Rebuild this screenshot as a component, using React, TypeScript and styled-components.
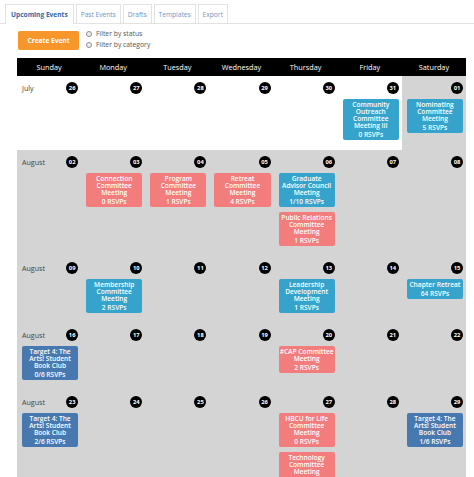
import { Fragment } from 'react';
import styled, { createGlobalStyle } from 'styled-components';

type EventKind = 'blue' | 'pink' | 'navy';

interface CalEvent {
  lines: string[];
  rsvp: string;
  kind: EventKind;
}

interface Day {
  n: string;
  inMonth: boolean;
  events?: CalEvent[];
}

interface Week {
  month: string;
  days: Day[];
}

const eventColors: Record<EventKind, string> = {
  blue: '#35a3cb',
  pink: '#f37c7c',
  navy: '#4779b0',
};

const tabs = ['Upcoming Events', 'Past Events', 'Drafts', 'Templates', 'Export'];
const dayNames = ['Sunday', 'Monday', 'Tuesday', 'Wednesday', 'Thursday', 'Friday', 'Saturday'];

const committee = (first: string, rsvp: string, kind: EventKind): CalEvent => ({
  lines: [first, 'Committee', 'Meeting'],
  rsvp,
  kind,
});

const target = (rsvp: string): CalEvent => ({
  lines: ['Target 4: The', 'Arts! Student', 'Book Club'],
  rsvp,
  kind: 'navy',
});

const weeks: Week[] = [
  {
    month: 'July',
    days: [
      { n: '26', inMonth: false },
      { n: '27', inMonth: false },
      { n: '28', inMonth: false },
      { n: '29', inMonth: false },
      { n: '30', inMonth: false },
      {
        n: '31',
        inMonth: false,
        events: [
          { lines: ['Community', 'Outreach', 'Committee', 'Meeting III'], rsvp: '0 RSVPs', kind: 'blue' },
        ],
      },
      { n: '01', inMonth: true, events: [committee('Nominating', '5 RSVPs', 'blue')] },
    ],
  },
  {
    month: 'August',
    days: [
      { n: '02', inMonth: true },
      { n: '03', inMonth: true, events: [committee('Connection', '0 RSVPs', 'pink')] },
      { n: '04', inMonth: true, events: [committee('Program', '1 RSVPs', 'pink')] },
      { n: '05', inMonth: true, events: [committee('Retreat', '4 RSVPs', 'pink')] },
      {
        n: '06',
        inMonth: true,
        events: [
          { lines: ['Graduate', 'Advisor Council', 'Meeting'], rsvp: '1/10 RSVPs', kind: 'blue' },
          { lines: ['Public Relations', 'Committee', 'Meeting'], rsvp: '1 RSVPs', kind: 'pink' },
        ],
      },
      { n: '07', inMonth: true },
      { n: '08', inMonth: true },
    ],
  },
  {
    month: 'August',
    days: [
      { n: '09', inMonth: true },
      { n: '10', inMonth: true, events: [committee('Membership', '2 RSVPs', 'blue')] },
      { n: '11', inMonth: true },
      { n: '12', inMonth: true },
      {
        n: '13',
        inMonth: true,
        events: [{ lines: ['Leadership', 'Development', 'Meeting'], rsvp: '1 RSVPs', kind: 'blue' }],
      },
      { n: '14', inMonth: true },
      { n: '15', inMonth: true, events: [{ lines: ['Chapter Retreat'], rsvp: '64 RSVPs', kind: 'blue' }] },
    ],
  },
  {
    month: 'August',
    days: [
      { n: '16', inMonth: true, events: [target('0/6 RSVPs')] },
      { n: '17', inMonth: true },
      { n: '18', inMonth: true },
      { n: '19', inMonth: true },
      {
        n: '20',
        inMonth: true,
        events: [{ lines: ['#CAP Committee', 'Meeting'], rsvp: '2 RSVPs', kind: 'pink' }],
      },
      { n: '21', inMonth: true },
      { n: '22', inMonth: true },
    ],
  },
  {
    month: 'August',
    days: [
      { n: '23', inMonth: true, events: [target('2/6 RSVPs')] },
      { n: '24', inMonth: true },
      { n: '25', inMonth: true },
      { n: '26', inMonth: true },
      {
        n: '27',
        inMonth: true,
        events: [
          { lines: ['HBCU for Life', 'Committee', 'Meeting'], rsvp: '0 RSVPs', kind: 'pink' },
          committee('Technology', '0 RSVPs', 'pink'),
        ],
      },
      { n: '28', inMonth: true },
      { n: '29', inMonth: true, events: [target('1/6 RSVPs')] },
    ],
  },
];

const App = () => {
  return (
    <>
      <GlobalStyle />
      <Page>
        <TabBar>
          {tabs.map((t, i) => (
            <Tab key={t} active={i === 0}>
              {t}
            </Tab>
          ))}
        </TabBar>
        <Toolbar>
          <CreateButton>Create Event</CreateButton>
          <Filters>
            <FilterItem>
              <Radio />
              Filter by status
            </FilterItem>
            <FilterItem>
              <Radio />
              Filter by category
            </FilterItem>
          </Filters>
        </Toolbar>
        <Calendar>
          <HeaderRow>
            {dayNames.map((d) => (
              <HeaderCell key={d}>{d}</HeaderCell>
            ))}
          </HeaderRow>
          {weeks.map((week, wi) => (
            <WeekRow key={wi}>
              {week.days.map((day, di) => (
                <Cell key={day.n + di} inMonth={day.inMonth}>
                  <CellHead>
                    <MonthLabel>{di === 0 ? week.month : ''}</MonthLabel>
                    <DayNumber>{day.n}</DayNumber>
                  </CellHead>
                  {day.events?.map((ev, ei) => (
                    <EventBox key={ei} kind={ev.kind}>
                      <EventTitle>
                        {ev.lines.map((l, li) => (
                          <Fragment key={l}>
                            {li > 0 && <br />}
                            {l}
                          </Fragment>
                        ))}
                      </EventTitle>
                      <Rsvp>{ev.rsvp}</Rsvp>
                    </EventBox>
                  ))}
                </Cell>
              ))}
            </WeekRow>
          ))}
        </Calendar>
      </Page>
    </>
  );
};

export default App;

const GlobalStyle = createGlobalStyle`
  body {
    margin: 0;
    background: #ffffff;
    font-family: "Open Sans", "DejaVu Sans", sans-serif;
  }
`;

const Page = styled.div`
  width: 474px;
`;

const TabBar = styled.div`
  display: flex;
  gap: 2px;
  padding: 4px 0 0 5px;
  border-bottom: 1px solid #e2e2e2;
`;

const Tab = styled.div<{ active: boolean }>`
  height: 18px;
  display: flex;
  align-items: center;
  padding: 0 4px;
  border: 1px solid #e2e2e2;
  border-bottom: none;
  margin-bottom: ${({ active }) => (active ? '-1px' : '0')};
  background: #ffffff;
  font-size: 6.6px;
  font-weight: ${({ active }) => (active ? 700 : 400)};
  color: ${({ active }) => (active ? '#2f6aa8' : '#6b98c6')};
  ${({ active }) => (active ? 'padding: 0 5px 1px;' : '')}
`;

const Toolbar = styled.div`
  display: flex;
  align-items: center;
  gap: 7px;
  padding: 7px 0 0 18px;
`;

const CreateButton = styled.div`
  width: 61px;
  height: 19px;
  display: flex;
  align-items: center;
  justify-content: center;
  background: #f7972b;
  border-radius: 2px;
  color: #ffffff;
  font-size: 6.6px;
  font-weight: 700;
`;

const Filters = styled.div`
  display: flex;
  flex-direction: column;
  gap: 1px;
  margin-top: -3px;
`;

const FilterItem = styled.div`
  display: flex;
  align-items: center;
  gap: 4px;
  height: 10px;
  font-size: 6.8px;
  color: #555555;
`;

const Radio = styled.span`
  width: 4px;
  height: 4px;
  border-radius: 50%;
  border: 1px solid #8f8f8f;
  background: #eeeeee;
`;

const Calendar = styled.div`
  width: 449px;
  margin: 8px 0 0 17px;
`;

const HeaderRow = styled.div`
  display: grid;
  grid-template-columns: repeat(7, 1fr);
  height: 18px;
  background: #000000;
`;

const HeaderCell = styled.div`
  display: flex;
  align-items: center;
  justify-content: center;
  color: #ffffff;
  font-size: 7.3px;
`;

const WeekRow = styled.div`
  display: grid;
  grid-template-columns: repeat(7, 1fr);
`;

const Cell = styled.div<{ inMonth: boolean }>`
  display: flex;
  flex-direction: column;
  gap: 5px;
  padding: 6px 3px 10px 5px;
  background: ${({ inMonth }) => (inMonth ? '#d4d4d4' : '#ffffff')};
  min-width: 0;
`;

const CellHead = styled.div`
  display: flex;
  align-items: center;
  justify-content: space-between;
  height: 12px;
`;

const MonthLabel = styled.span`
  font-size: 7.1px;
  color: #444444;
`;

const DayNumber = styled.span`
  width: 12px;
  height: 12px;
  border-radius: 50%;
  background: #000000;
  color: #ffffff;
  font-size: 5.8px;
  font-weight: 700;
  display: flex;
  align-items: center;
  justify-content: center;
`;

const EventBox = styled.div<{ kind: EventKind }>`
  background: ${({ kind }) => eventColors[kind]};
  border-radius: 2px;
  padding: 2px 0;
  color: #ffffff;
  text-align: center;
  font-size: 6.6px;
  font-weight: 600;
`;

const EventTitle = styled.div`
  line-height: 7px;
  white-space: nowrap;
`;

const Rsvp = styled.div`
  line-height: 7px;
  margin-top: 2px;
`;
